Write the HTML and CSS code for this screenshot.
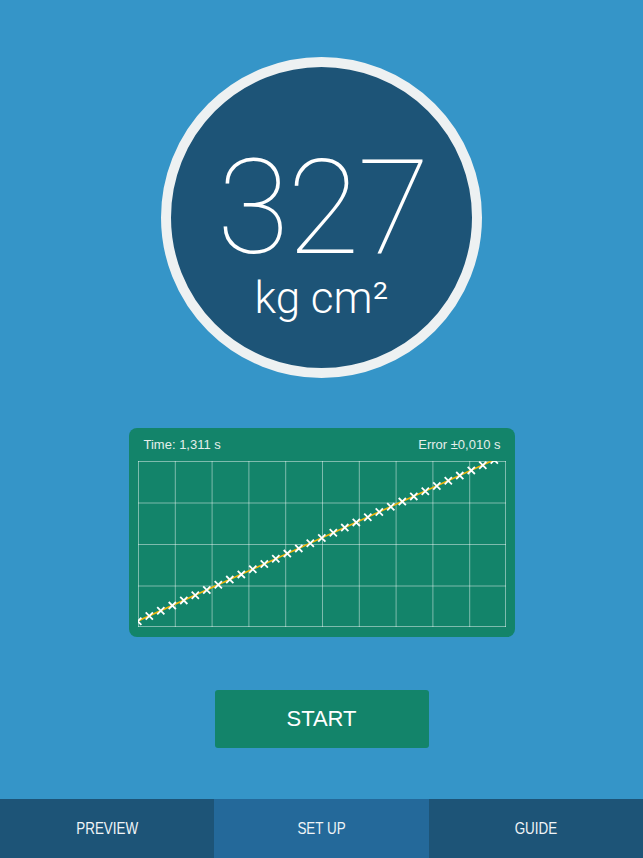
FILE: index.html
```html
<!DOCTYPE html>
<html lang="en">
<head>
    <meta charset="UTF-8">
    <meta name="viewport" content="width=device-width, initial-scale=1.0">
    <title>Inertia Meter</title>
    <link rel="stylesheet" href="styles.css">
</head>
<body>
    <div class="screen">
        <!-- Big result dial -->
        <div class="main">
            <div class="dial">
                <div class="dial-value">327</div>
                <div class="dial-unit">kg cm²</div>
            </div>

            <!-- Measurement chart -->
            <div class="chart-card">
                <div class="chart-head">
                    <span>Time: 1,311 s</span>
                    <span>Error ±0,010 s</span>
                </div>
                <svg class="chart" width="368" height="166" viewBox="0 0 368 166">
                    <defs>
                        <path id="cross" d="M-3.6 -3.6 L3.6 3.6 M3.6 -3.6 L-3.6 3.6" />
                    </defs>
                    <g class="grid-lines">
                        <path d="M0.5 0 V166 M37.3 0 V166 M74.1 0 V166 M110.9 0 V166 M147.7 0 V166 M184.5 0 V166 M221.3 0 V166 M258.1 0 V166 M294.9 0 V166 M331.7 0 V166 M367.5 0 V166" />
                        <path d="M0 0.5 H368 M0 42 H368 M0 83.5 H368 M0 125 H368 M0 165.5 H368" />
                    </g>
                    <line class="fit" x1="0" y1="160" x2="368" y2="-6.5" />
                    <g class="points">
                        <use href="#cross" x="-0.2" y="160.2" />
                        <use href="#cross" x="11.3" y="155" />
                        <use href="#cross" x="22.8" y="149.8" />
                        <use href="#cross" x="34.3" y="144.6" />
                        <use href="#cross" x="45.8" y="139.4" />
                        <use href="#cross" x="57.3" y="134.2" />
                        <use href="#cross" x="68.8" y="129" />
                        <use href="#cross" x="80.3" y="123.8" />
                        <use href="#cross" x="91.8" y="118.6" />
                        <use href="#cross" x="103.3" y="113.4" />
                        <use href="#cross" x="114.8" y="108.2" />
                        <use href="#cross" x="126.3" y="103" />
                        <use href="#cross" x="137.8" y="97.8" />
                        <use href="#cross" x="149.3" y="92.6" />
                        <use href="#cross" x="160.8" y="87.4" />
                        <use href="#cross" x="172.3" y="82.2" />
                        <use href="#cross" x="183.8" y="77" />
                        <use href="#cross" x="195.3" y="71.8" />
                        <use href="#cross" x="206.8" y="66.6" />
                        <use href="#cross" x="218.3" y="61.4" />
                        <use href="#cross" x="229.8" y="56.2" />
                        <use href="#cross" x="241.3" y="51" />
                        <use href="#cross" x="252.8" y="45.8" />
                        <use href="#cross" x="264.3" y="40.6" />
                        <use href="#cross" x="275.8" y="35.4" />
                        <use href="#cross" x="287.3" y="30.2" />
                        <use href="#cross" x="298.8" y="25" />
                        <use href="#cross" x="310.3" y="19.8" />
                        <use href="#cross" x="321.8" y="14.6" />
                        <use href="#cross" x="333.3" y="9.4" />
                        <use href="#cross" x="344.8" y="4.2" />
                        <use href="#cross" x="356.3" y="-1" />
                    </g>
                </svg>
            </div>

            <button class="start-button">START</button>
        </div>

        <!-- Bottom tab bar -->
        <div class="tab-bar">
            <div class="tab"><span class="tab-label">PREVIEW</span></div>
            <div class="tab tab-active"><span class="tab-label">SET UP</span></div>
            <div class="tab"><span class="tab-label">GUIDE</span></div>
        </div>
    </div>
</body>
</html>
```

FILE: styles.css
```css
body {
    margin: 0;
    background-color: #3595c8;
    font-family: "Liberation Sans", Arial, sans-serif;
    overflow: hidden;
}

.screen {
    height: 858px;
    display: flex;
    flex-direction: column;
}

/* Main area with dial, chart and button */
.main {
    flex: 1;
    display: flex;
    flex-direction: column;
    align-items: center;
    padding-top: 57px;
}

/* Result dial */
.dial {
    width: 321px;
    height: 321px;
    box-sizing: border-box;
    border: 10px solid #edf1f2;
    border-radius: 50%;
    background-color: #1d5477;
    color: #fff;
    display: flex;
    flex-direction: column;
    align-items: center;
    padding-top: 86px;
}

.dial-value {
    font-family: Roboto, "Noto Sans", sans-serif;
    font-weight: 100;
    font-size: 132px;
    line-height: 110px;
    letter-spacing: -2px;
    margin-right: -2px;
}

.dial-unit {
    font-family: Roboto, "Noto Sans", sans-serif;
    font-weight: 300;
    font-size: 44px;
    line-height: 40px;
    margin-top: 15px;
}

/* Chart card */
.chart-card {
    margin-top: 50px;
    width: 386px;
    box-sizing: border-box;
    padding: 9px 9px 10px;
    background-color: #13846a;
    border-radius: 8px;
}

.chart-head {
    display: flex;
    justify-content: space-between;
    padding: 0 5px 0 6px;
    font-size: 13px;
    line-height: 16px;
    color: #e4efeb;
    margin-bottom: 8px;
}

.chart {
    display: block;
}

.grid-lines path {
    stroke: rgba(255, 255, 255, 0.45);
    stroke-width: 1;
    fill: none;
}

.fit {
    stroke: #f0b608;
    stroke-width: 1.6;
}

.points use {
    stroke: #fff;
    stroke-width: 1.8;
    fill: none;
}

/* Start button */
.start-button {
    margin-top: 53px;
    width: 214px;
    height: 58px;
    border: none;
    border-radius: 3px;
    background-color: #13846a;
    color: #fff;
    font-family: "Liberation Sans", Arial, sans-serif;
    font-size: 22px;
    cursor: pointer;
}

/* Tab bar */
.tab-bar {
    display: flex;
    height: 59px;
}

.tab {
    flex: 1;
    display: flex;
    align-items: center;
    justify-content: center;
    background-color: #1d5477;
    color: #f0f4f7;
    font-size: 17px;
}

.tab-label {
    display: inline-block;
    transform: scaleX(0.79);
}

.tab-active {
    background-color: #24699a;
}
```
